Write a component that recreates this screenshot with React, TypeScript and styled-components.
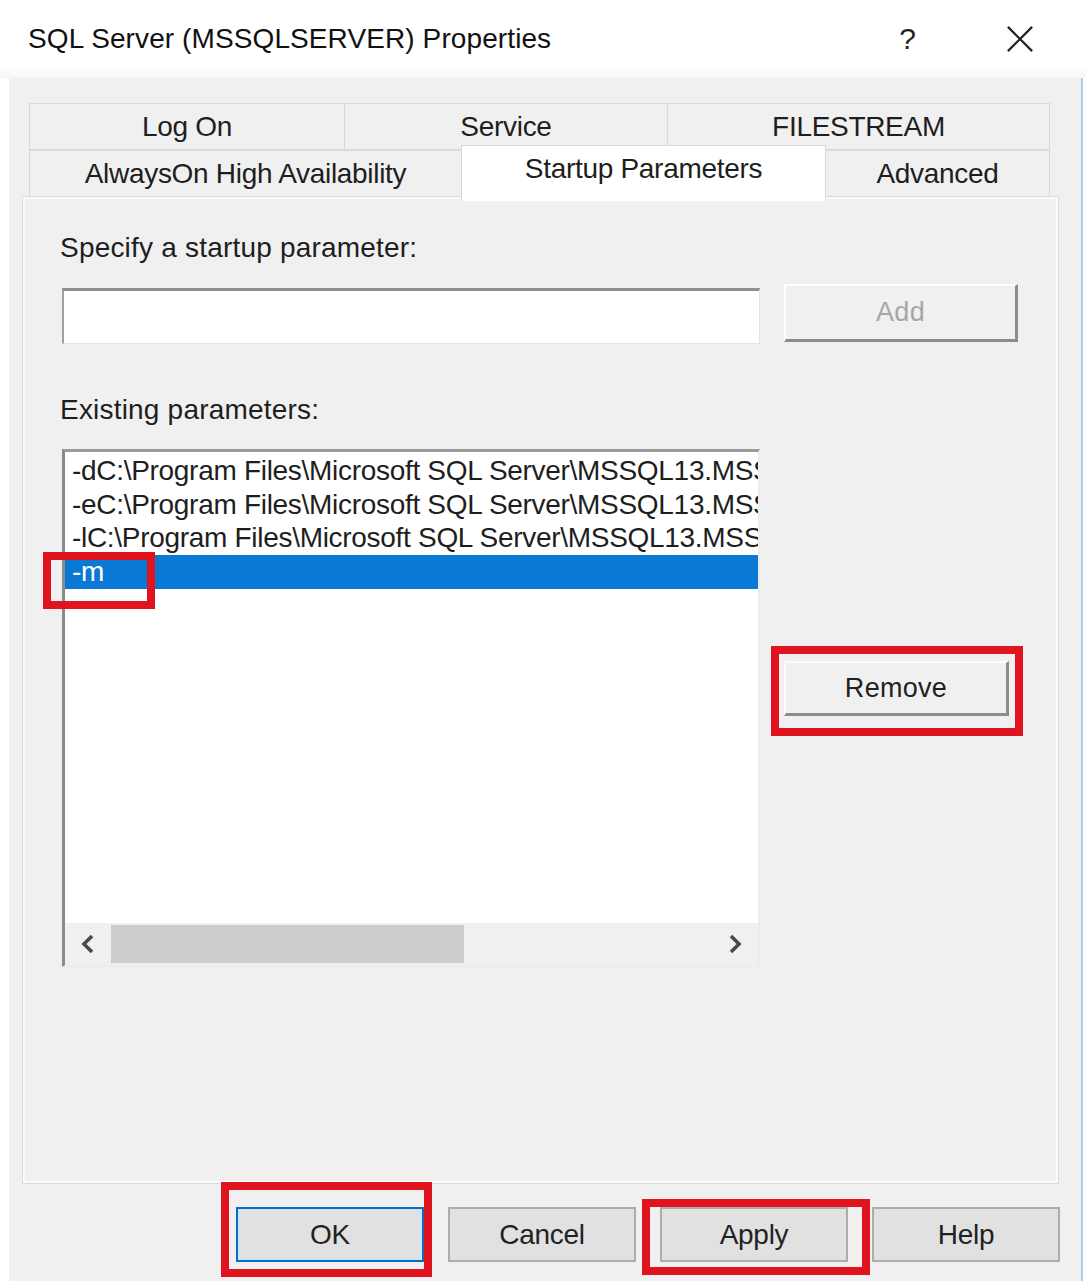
import styled, { createGlobalStyle } from "styled-components";

const TAB_ROWS = [
  [
    { label: "Log On", width: 316 },
    { label: "Service", width: 324 },
    { label: "FILESTREAM", width: 383 },
  ],
  [
    { label: "AlwaysOn High Availability", width: 433 },
    { label: "Startup Parameters", width: 365, active: true },
    { label: "Advanced", width: 225 },
  ],
];

const PARAMETERS = [
  "-dC:\\Program Files\\Microsoft SQL Server\\MSSQL13.MSSQLSERVER\\MSSQL\\DATA\\master.mdf",
  "-eC:\\Program Files\\Microsoft SQL Server\\MSSQL13.MSSQLSERVER\\MSSQL\\Log\\ERRORLOG",
  "-lC:\\Program Files\\Microsoft SQL Server\\MSSQL13.MSSQLSERVER\\MSSQL\\DATA\\mastlog.ldf",
  "-m",
];

const SELECTED_INDEX = 3;

export default function App() {
  return (
    <>
      <GlobalStyle />
      <Window>
        <TitleBar>
          <Title>SQL Server (MSSQLSERVER) Properties</Title>
          <HelpGlyph>?</HelpGlyph>
          <CloseGlyph viewBox="0 0 30 30" aria-label="Close">
            <path d="M2 2 L28 28 M28 2 L2 28" />
          </CloseGlyph>
        </TitleBar>

        <Body>
          <TabStrip>
            {TAB_ROWS.map((row, rowIndex) => (
              <TabRow key={rowIndex}>
                {row.map((tab) => (
                  <Tab key={tab.label} $width={tab.width} $active={Boolean(tab.active)}>
                    {tab.label}
                  </Tab>
                ))}
              </TabRow>
            ))}
          </TabStrip>

          <Panel>
            <PanelGrid>
              <FieldLabel>Specify a startup parameter:</FieldLabel>
              <TextInput />
              <DialogButton type="button" disabled $width={234} $height={58}>
                Add
              </DialogButton>

              <FieldLabel $gap={51}>Existing parameters:</FieldLabel>
              <ListBox>
                <ListItems>
                  {PARAMETERS.map((param, index) => (
                    <ListItem key={param} $selected={index === SELECTED_INDEX}>
                      {param}
                    </ListItem>
                  ))}
                </ListItems>
                <HScrollBar>
                  <ScrollArrow>
                    <Chevron viewBox="0 0 14 20">
                      <path d="M11 2 L3 10 L11 18" />
                    </Chevron>
                  </ScrollArrow>
                  <ScrollTrack>
                    <ScrollThumb />
                  </ScrollTrack>
                  <ScrollArrow>
                    <Chevron viewBox="0 0 14 20">
                      <path d="M3 2 L11 10 L3 18" />
                    </Chevron>
                  </ScrollArrow>
                </HScrollBar>
                <Highlight $top={100} $left={-22} $width={112} $height={57} />
              </ListBox>
              <RemoveCell>
                <DialogButton type="button" $width={225} $height={55}>
                  Remove
                  <Highlight $top={-17} $left={-15} $width={252} $height={90} />
                </DialogButton>
              </RemoveCell>
            </PanelGrid>
          </Panel>

          <Footer>
            <FooterButton type="button" $focused>
              OK
              <Highlight $top={-27} $left={-17} $width={211} $height={95} />
            </FooterButton>
            <FooterButton type="button">Cancel</FooterButton>
            <FooterButton type="button">
              Apply
              <Highlight $top={-10} $left={-20} $width={228} $height={76} />
            </FooterButton>
            <FooterButton type="button">Help</FooterButton>
          </Footer>
        </Body>
      </Window>
    </>
  );
}

const GlobalStyle = createGlobalStyle`
  html, body {
    margin: 0;
    padding: 0;
    background: #fff;
  }

  body {
    font-family: "Liberation Sans", Arial, sans-serif;
    color: #1e1e1e;
  }
`;

const Window = styled.div`
  display: flex;
  flex-direction: column;
  width: 1086px;
  height: 1281px;
  background: #fff;
  overflow: hidden;
`;

const TitleBar = styled.div`
  display: flex;
  align-items: center;
  height: 78px;
  flex-shrink: 0;
  padding-left: 28px;
  background: linear-gradient(#fff 85%, #f6f6f6);
`;

const Title = styled.div`
  font-size: 28px;
  color: #111;
  letter-spacing: 0.1px;
`;

const HelpGlyph = styled.div`
  margin-left: auto;
  font-size: 30px;
  color: #222;
`;

const CloseGlyph = styled.svg`
  width: 28px;
  height: 28px;
  margin: 0 52px 0 90px;
  fill: none;
  stroke: #222;
  stroke-width: 2.4;
`;

const Body = styled.div`
  display: flex;
  flex-direction: column;
  flex: 1;
  margin: 0 3px 0 9px;
  padding: 25px 21px 0 14px;
  background: #f0f0f0;
  border-right: 2px solid #a9cfee;
`;

const TabStrip = styled.div`
  display: flex;
  flex-direction: column;
  margin-right: 2px;
`;

const TabRow = styled.div`
  display: flex;
  height: 47px;
  margin: 0 5px 0 7px;
  align-items: flex-start;
`;

const Tab = styled.div<{ $width: number; $active: boolean }>`
  display: flex;
  align-items: center;
  justify-content: center;
  width: ${({ $width }) => $width}px;
  height: ${({ $active }) => ($active ? 56 : 47)}px;
  margin-top: ${({ $active }) => ($active ? -5 : 0)}px;
  padding-bottom: ${({ $active }) => ($active ? 10 : 0)}px;
  box-sizing: border-box;
  border: 1px solid #d9d9d9;
  border-bottom: ${({ $active }) => ($active ? "0" : "1px solid #d9d9d9")};
  margin-left: -1px;
  background: ${({ $active }) => ($active ? "#fff" : "#f0f0f0")};
  position: relative;
  z-index: ${({ $active }) => ($active ? 2 : 0)};
  font-size: 28px;
  letter-spacing: -0.3px;
  color: #1e1e1e;
`;

const Panel = styled.div`
  height: 986px;
  margin-right: 2px;
  box-sizing: border-box;
  border: 2px solid #fbfbfb;
  box-shadow: 0 0 0 1px #dadada;
  padding: 34px 38px 0 37px;
  background: #f0f0f0;
`;

const PanelGrid = styled.div`
  display: grid;
  grid-template-columns: 698px 234px;
  column-gap: 24px;
  align-items: start;
`;

const FieldLabel = styled.div<{ $gap?: number }>`
  grid-column: 1 / -1;
  margin-top: ${({ $gap }) => $gap ?? 0}px;
  margin-bottom: 21px;
  margin-left: -2px;
  font-size: 28px;
  line-height: 30px;
  letter-spacing: 0.2px;
  color: #1e1e1e;
`;

const TextInput = styled.div`
  height: 56px;
  margin-top: 4px;
  box-sizing: border-box;
  background: #fff;
  border-top: 3px solid #8f8f8f;
  border-left: 2px solid #a0a0a0;
  border-right: 1px solid #e3e3e3;
  border-bottom: 1px solid #e3e3e3;
`;

const DialogButton = styled.button<{ $width: number; $height: number }>`
  position: relative;
  width: ${({ $width }) => $width}px;
  height: ${({ $height }) => $height}px;
  padding: 0;
  box-sizing: border-box;
  background: #f0f0f0;
  border-top: 2px solid #fdfdfd;
  border-left: 2px solid #fdfdfd;
  border-right: 3px solid #8c8c8c;
  border-bottom: 3px solid #8c8c8c;
  font-family: inherit;
  font-size: 27px;
  letter-spacing: 0.3px;
  color: #222;

  &:disabled {
    color: #a6a6a6;
  }
`;

const ListBox = styled.div`
  position: relative;
  display: flex;
  flex-direction: column;
  height: 518px;
  margin-top: 3px;
  box-sizing: border-box;
  background: #fff;
  border-top: 3px solid #9a9a9a;
  border-left: 3px solid #8a8a8a;
  border-right: 2px solid #ececec;
  border-bottom: 2px solid #ececec;
`;

const ListItems = styled.div`
  flex: 1;
  padding-top: 2px;
  overflow: hidden;
`;

const ListItem = styled.div<{ $selected: boolean }>`
  height: 33.7px;
  line-height: 33.7px;
  padding-left: 7px;
  white-space: nowrap;
  overflow: hidden;
  font-size: 28px;
  letter-spacing: -0.3px;
  background: ${({ $selected }) => ($selected ? "#0a78d5" : "transparent")};
  color: ${({ $selected }) => ($selected ? "#fff" : "#1e1e1e")};
`;

const HScrollBar = styled.div`
  display: flex;
  align-items: center;
  height: 42px;
  background: #f0f0f0;
`;

const ScrollArrow = styled.div`
  display: flex;
  align-items: center;
  justify-content: center;
  width: 46px;
  height: 100%;
`;

const Chevron = styled.svg`
  width: 14px;
  height: 20px;
  fill: none;
  stroke: #4a4a4a;
  stroke-width: 3.6;
`;

const ScrollTrack = styled.div`
  flex: 1;
  height: 38px;
`;

const ScrollThumb = styled.div`
  width: 353px;
  height: 100%;
  background: #cdcdcd;
`;

const RemoveCell = styled.div`
  padding-top: 215px;
`;

const Highlight = styled.div<{
  $top: number;
  $left: number;
  $width: number;
  $height: number;
}>`
  position: absolute;
  top: ${({ $top }) => $top}px;
  left: ${({ $left }) => $left}px;
  width: ${({ $width }) => $width}px;
  height: ${({ $height }) => $height}px;
  box-sizing: border-box;
  border: 8px solid #e0141f;
  pointer-events: none;
  z-index: 3;
`;

const Footer = styled.div`
  display: flex;
  justify-content: flex-end;
  gap: 24px;
  padding-top: 24px;
`;

const FooterButton = styled.button<{ $focused?: boolean }>`
  position: relative;
  width: 188px;
  height: 55px;
  padding: 0;
  box-sizing: border-box;
  background: #e1e1e1;
  border: 2px solid ${({ $focused }) => ($focused ? "#0a6cc2" : "#adadad")};
  box-shadow: ${({ $focused }) => ($focused ? "inset 0 0 0 2px #cde6f7" : "none")};
  font-family: inherit;
  font-size: 28px;
  letter-spacing: -0.3px;
  color: #222;
`;
